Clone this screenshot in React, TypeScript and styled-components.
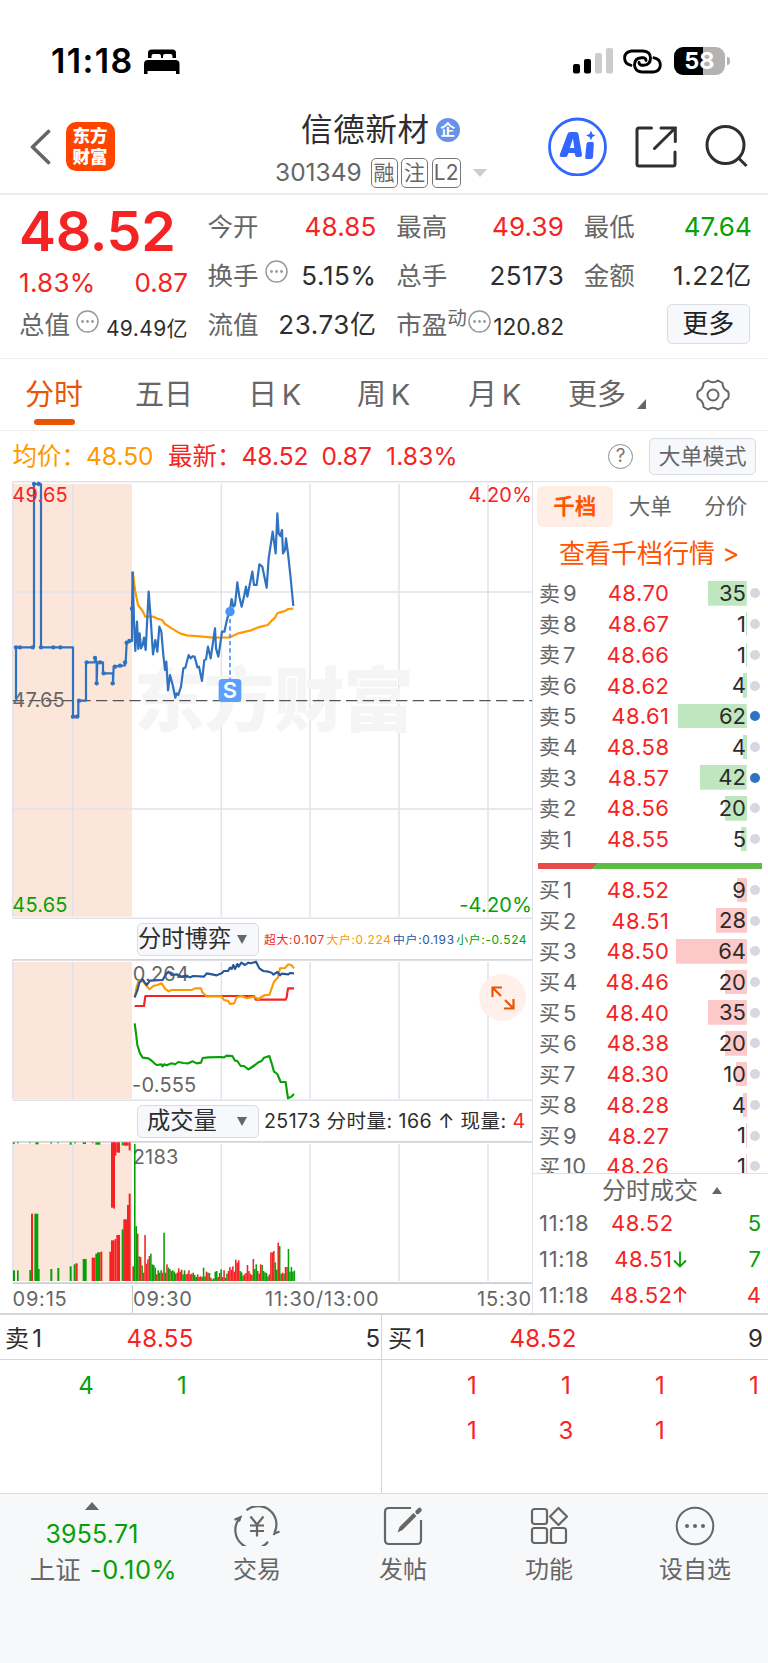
import React from 'react';
import styled, { createGlobalStyle } from 'styled-components';

const C = {
  red: '#f52323',
  green: '#07a007',
  text: '#2e2e2e',
  sub: '#666666',
  line: '#dfe2ea',
  accent: '#ea5504',
  orange: '#ff5500',
  amber: '#ff9900',
  blue: '#2f72c2',
  navy: '#2a5599',
  peach: '#fce6da',
};

const Global = createGlobalStyle`
  * { box-sizing: border-box; }
  body {
    margin: 0;
    background: #fff;
    color: ${C.text};
    font-family: Inter, "Noto Sans CJK SC", sans-serif;
    line-height: 1;
  }
  svg { display: block; flex: none; }
`;

const Page = styled.div`
  width: 768px;
  height: 1663px;
  display: flex;
  flex-direction: column;
  overflow: hidden;
  white-space: nowrap;
`;

const Txt = styled.span<{ $s: number; $c?: string; $w?: number; $ls?: number }>`
  font-size: ${p => p.$s}px;
  color: ${p => p.$c || 'inherit'};
  font-weight: ${p => p.$w || 400};
  letter-spacing: ${p => p.$ls || 0}px;
`;

/* ---------- status bar ---------- */
const StatusBar = styled.div`
  height: 100px;
  padding: 22px 38px 0 51px;
  display: flex;
  align-items: center;
  color: #000;
`;
const BedIcon = styled.svg`
  margin-left: 10px;
`;
const StatusRight = styled.div`
  margin-left: auto;
  display: flex;
  align-items: center;
  gap: 9px;
`;
const Battery = styled.div`
  width: 51px;
  height: 28px;
  margin-left: 3px;
  border-radius: 9px;
  display: flex;
  align-items: center;
  justify-content: center;
  color: #fff;
  font-size: 23.5px;
  font-weight: 700;
  background: linear-gradient(90deg, #000 29px, #b3b3b3 29px);
`;
const BatteryCap = styled.div`
  width: 3px;
  height: 8px;
  margin-left: -7px;
  border-radius: 0 3px 3px 0;
  background: #b3b3b3;
`;

/* ---------- header ---------- */
const Header = styled.header`
  height: 95px;
  border-bottom: 2px solid #ebebeb;
  display: flex;
  align-items: center;
  padding: 0 20px 0 29.5px;
`;
const Logo = styled.div`
  width: 49px;
  height: 49px;
  margin-left: 15px;
  border-radius: 10px;
  background: #ff4400;
  color: #fff;
  font-size: 17.5px;
  font-weight: 900;
  line-height: 20.5px;
  text-align: center;
  padding-top: 4px;
`;
const TitleBlock = styled.div`
  flex: 1;
  display: flex;
  flex-direction: column;
  padding: 11px 0 0 160.5px;
`;
const TitleLine = styled.div<{ $h: number; $pad?: number }>`
  height: ${p => p.$h}px;
  padding-left: ${p => p.$pad || 0}px;
  display: flex;
  align-items: center;
`;
const StockCode = styled.span`
  width: 95.5px;
  color: ${C.sub};
  font-size: 24.5px;
`;
const Badge = styled.div`
  width: 24px;
  height: 24px;
  margin-left: 6px;
  border-radius: 50%;
  background: #6792e8;
  color: #fff;
  font-size: 15px;
  font-weight: 700;
  line-height: 23px;
  text-align: center;
`;
const Tag = styled.div<{ $w: number }>`
  width: ${p => p.$w}px;
  height: 30px;
  margin-right: 3.6px;
  border: 1px solid #777;
  border-radius: 5px;
  color: ${C.sub};
  font-size: 21px;
  line-height: 28px;
  text-align: center;
`;
const Caret = styled.div<{ $w: number; $h: number; $c: string; $up?: boolean; $ml?: number }>`
  width: 0;
  height: 0;
  flex: none;
  margin-left: ${p => p.$ml || 0}px;
  border-left: ${p => p.$w / 2}px solid transparent;
  border-right: ${p => p.$w / 2}px solid transparent;
  ${p => (p.$up ? 'border-bottom' : 'border-top')}: ${p => p.$h}px solid ${p => p.$c};
`;
const HeaderActions = styled.div`
  display: flex;
  align-items: center;
  gap: 28px;
`;

/* ---------- quote ---------- */
const Quote = styled.section`
  height: 164px;
  padding: 7px 16px 8px 19px;
  border-bottom: 1px solid #eee;
  display: grid;
  grid-template-columns: 169px 169px 168px 168px;
  column-gap: 19.6px;
`;
const QuoteCol = styled.div`
  display: flex;
  flex-direction: column;
`;
const Cell = styled.div<{ $h?: number; $top?: number }>`
  height: ${p => p.$h || 49}px;
  padding-top: ${p => p.$top || 0}px;
  display: flex;
  align-items: center;
  justify-content: space-between;
`;
const CellLabel = styled.span`
  display: flex;
  align-items: center;
  font-size: 25.5px;
  color: ${C.sub};
`;
const Raised = styled.span<{ $gap?: number; $up: number }>`
  display: flex;
  align-items: center;
  margin-left: ${p => p.$gap || 0}px;
  margin-bottom: ${p => p.$up}px;
  font-size: 19.5px;
`;
const SmallValue = styled.span<{ $s: number; $top: number; $ls: number }>`
  font-size: ${p => p.$s}px;
  padding-top: ${p => p.$top}px;
  letter-spacing: ${p => p.$ls}px;
`;
const Button = styled.div<{ $w: number; $h: number }>`
  width: ${p => p.$w}px;
  height: ${p => p.$h}px;
  border: 1.5px solid #d9dce2;
  border-radius: 5px;
  background: #f7f8fb;
  display: flex;
  align-items: center;
  justify-content: center;
`;
const MoreCell = styled(Cell)`
  justify-content: flex-end;
  padding: 0 2px 2px 0;
`;

/* ---------- period tabs ---------- */
const Tabs = styled.nav`
  height: 72px;
  border-bottom: 1px solid #eee;
  display: flex;
  align-items: center;
  justify-content: space-between;
  padding: 0 38px 0 25px;
`;
const TabList = styled.div`
  height: 100%;
  display: flex;
`;
const Tab = styled.div<{ $w: number; $on?: boolean }>`
  width: ${p => p.$w}px;
  height: 100%;
  display: flex;
  flex-direction: column;
  padding-top: 21px;
  font-size: 29px;
  line-height: 30px;
  word-spacing: -3.5px;
  color: ${p => (p.$on ? C.accent : C.sub)};
  &::after {
    content: '';
    display: ${p => (p.$on ? 'block' : 'none')};
    width: 41px;
    height: 6px;
    margin: 9px 0 0 9px;
    border-radius: 3px;
    background: ${C.accent};
  }
`;
const MoreTab = styled(Tab)`
  flex-direction: row;
  align-items: flex-start;
  justify-content: flex-start;
  svg { margin: 19px 0 0 11px; }
`;

const InfoLine = styled.div`
  height: 50px;
  display: flex;
  align-items: center;
  padding: 0 12px 0 12.5px;
`;
const InfoItem = styled.div<{ $w: number; $c: string; $ls?: number }>`
  width: ${p => p.$w}px;
  color: ${p => p.$c};
  font-size: 24.5px;
  letter-spacing: ${p => p.$ls || 0}px;
`;
const HelpButton = styled.div`
  margin: 0 16px 0 auto;
  width: 25px;
  height: 25px;
  border: 1.5px solid #8c8c8c;
  border-radius: 50%;
  color: #777;
  font-size: 19px;
  line-height: 22px;
  text-align: center;
`;

/* ---------- main area ---------- */
const Main = styled.section`
  height: 834px;
  border-bottom: 2px solid #d3d5dd;
  display: flex;
`;
const Charts = styled.div`
  width: 533px;
  border-right: 1.5px solid ${C.line};
  display: flex;
  flex-direction: column;
`;
const ChartHead = styled.div`
  height: 40px;
  padding-left: 137px;
  display: flex;
  align-items: center;
`;
const Dropdown = styled.div<{ $pad: number }>`
  width: 122px;
  height: 33px;
  padding: 0 11px 0 ${p => p.$pad}px;
  margin-right: 5px;
  border: 1.5px solid #d9dce2;
  border-radius: 5px;
  background: #f7f8fb;
  display: flex;
  align-items: center;
  justify-content: space-between;
  font-size: 23.3px;
`;
const Legend = styled.div`
  display: flex;
  gap: 1.6px;
  padding-top: 1px;
  font-size: 11.9px;
  letter-spacing: 0.6px;
`;
const VolumeInfo = styled.div`
  padding-top: 1px;
  font-size: 19.6px;
  letter-spacing: 0.4px;
`;
const SubChart = styled.div`
  position: relative;
  height: 142px;
`;
const ExpandButton = styled.div`
  position: absolute;
  left: 479px;
  top: 15px;
  width: 47px;
  height: 47px;
  border-radius: 50%;
  background: rgba(255, 238, 230, 0.85);
  display: flex;
  align-items: center;
  justify-content: center;
`;
const TimeAxis = styled.div`
  height: 29px;
  display: grid;
  grid-template-columns: 119.5px 133px 1fr 55px;
  padding: 1px 0 0 12.5px;
  align-items: center;
  color: ${C.sub};
  font-size: 20px;
  letter-spacing: 0.8px;
`;
const TimeMark = styled.span<{ $line?: boolean }>`
  height: 100%;
  display: flex;
  align-items: center;
  border-left: ${p => (p.$line ? 1 : 0)}px solid #ccc;
`;

const Book = styled.div`
  width: 235px;
  display: flex;
  flex-direction: column;
  > * { flex: none; }
`;
const BookTabs = styled.div`
  height: 51px;
  border-top: 1px solid ${C.line};
  padding: 4px 0 0 4px;
  display: flex;
`;
const BookTab = styled.div<{ $on?: boolean }>`
  width: 75.5px;
  height: 41px;
  flex: none;
  border-radius: 6px;
  display: flex;
  align-items: center;
  justify-content: center;
  font-size: 21.5px;
  font-weight: ${p => (p.$on ? 700 : 400)};
  color: ${p => (p.$on ? C.orange : C.sub)};
  background: ${p => (p.$on ? '#ffeee6' : 'transparent')};
`;
const BookLink = styled.div`
  height: 46px;
  padding: 0 0 2px 26px;
  display: flex;
  align-items: center;
  color: ${C.orange};
  font-size: 26px;
`;
const Level = styled.div`
  height: 30.73px;
  padding-left: 6px;
  display: grid;
  grid-template-columns: 61px 69.5px 77.5px 16px;
  align-items: center;
  font-size: 22px;
`;
const LevelName = styled.span`
  display: flex;
  gap: 3px;
  align-items: center;
  color: ${C.sub};
  letter-spacing: 0.3px;
`;
const LevelPrice = styled.span`
  text-align: right;
  color: ${C.red};
  letter-spacing: 0.5px;
`;
const Volume = styled.span<{ $w: number; $sell?: boolean }>`
  height: 24.5px;
  line-height: 24.5px;
  text-align: right;
  padding-right: 1px;
  background: linear-gradient(${p => (p.$sell ? '#bfe7bf, #bfe7bf' : '#fdc8c8, #fdc8c8')}) right / ${p => p.$w}px 100% no-repeat;
  color: #2b2b2b;
`;
const Dot = styled.span<{ $on?: boolean }>`
  width: 10px;
  height: 10px;
  margin-left: 3px;
  border-radius: 50%;
  background: ${p => (p.$on ? C.blue : '#d5d8de')};
`;
const Ratio = styled.div`
  height: 6px;
  width: 224px;
  margin: 8.5px 0 5.5px 5px;
  background: linear-gradient(135deg, #e94b4b 42.4px, #5dbb46 42.4px);
`;
const BuyList = styled.div`
  height: 299px;
  overflow: hidden;
`;
const TradesHead = styled.div`
  height: 32px;
  border-top: 1.5px solid ${C.line};
  padding: 2px 0 0 69px;
  display: flex;
  align-items: center;
  gap: 14px;
  color: ${C.sub};
`;
const Trade = styled.div`
  height: 35.8px;
  padding: 0 7px 0 6px;
  display: grid;
  grid-template-columns: 67px 66.500px 17.500px 1fr;
  align-items: center;
  font-size: 22px;
`;
const TradeTime = styled.span`
  color: ${C.sub};
  letter-spacing: 0.7px;
`;
const TradePrice = styled.span<{ $right?: boolean }>`
  color: ${C.red};
  letter-spacing: 0.5px;
  padding-left: ${p => (p.$right ? 0 : 5)}px;
  text-align: ${p => (p.$right ? 'right' : 'left')};
`;
const TradeQty = styled.span<{ $c: string }>`
  grid-column: 4;
  color: ${p => p.$c};
  text-align: right;
`;

/* ---------- queue ---------- */
const Queue = styled.section`
  height: 178px;
  display: grid;
  grid-template-columns: 381px 387px;
`;
const QueueSide = styled.div<{ $line?: boolean }>`
  border-left: ${p => (p.$line ? 1.5 : 0)}px solid #d3d5dd;
`;
const QueueHead = styled.div<{ $l: number; $r: number }>`
  height: 45px;
  border-bottom: 1.5px solid #d3d5dd;
  padding: 4px ${p => p.$r}px 0 ${p => p.$l}px;
  display: grid;
  grid-template-columns: 121.5px 1fr auto;
  align-items: center;
  font-size: 24px;
  word-spacing: -3.5px;
`;
const QueueRow = styled.div<{ $c: string; $left: number; $step: number }>`
  height: 45px;
  padding: 7px 0 0 ${p => p.$left}px;
  display: flex;
  align-items: center;
  color: ${p => p.$c};
  font-size: 24px;
  span { width: ${p => p.$step}px; text-align: center; flex: none; }
`;

/* ---------- bottom bar ---------- */
const BottomBar = styled.footer`
  flex: 1;
  border-top: 1.5px solid #dcdde0;
  background: #f7f8fa;
  display: grid;
  grid-template-columns: 184px repeat(4, 146px);
`;
const NavItem = styled.div`
  display: flex;
  flex-direction: column;
  align-items: center;
  padding-top: 12px;
  gap: 12px;
  color: ${C.sub};
  font-size: 24px;
`;
const IndexItem = styled.div`
  display: flex;
  flex-direction: column;
  align-items: center;
  padding-top: 8px;
  color: ${C.green};
`;
const IndexLine = styled.div<{ $top: number; $shift?: number }>`
  margin: ${p => p.$top}px 0 0 ${p => p.$shift || 0}px;
  display: flex;
  gap: 9px;
  align-items: center;
`;

const Ellipsis = () => (
  <svg width="23" height="23" viewBox="0 0 23 23" fill="#999">
    <circle cx="11.5" cy="11.5" r="10.5" fill="none" stroke="#999" strokeWidth="1.5" />
    <circle cx="6.5" cy="11.5" r="1.4" /><circle cx="11.5" cy="11.5" r="1.4" /><circle cx="16.5" cy="11.5" r="1.4" />
  </svg>
);

/* Chart geometry: three drawing units to one CSS pixel. */
const VLINES = [664, 930, 1197, 1464];
const label = { fontSize: 60, letterSpacing: 0.6, fontFamily: 'Inter, sans-serif' };

const AUCTION = '48,672 48,517 102,517 102,27 123,27 123,517 219,517 219,725 235,725 235,677 258,677 258,562 285,562 285,549 290,562 290,625 292,562 309,562 309,595 339,595 339,625 341,575 358,573 375,571 377,562 380,503 388,498 396,498 396,401 398,290';
const PRICE = '398,290 402,440 406,528 411,440 415,522 419,475 423,520 428,510 432,488 437,525 446,350 452,430 459,538 466,495 472,530 478,455 484,470 490,540 495,585 499,560 504,646 510,600 518,630 526,668 530,655 535,660 543,635 550,580 556,578 566,540 572,550 577,544 584,545 592,577 597,575 606,618 613,555 618,553 624,515 632,550 645,460 648,520 655,545 661,505 666,470 673,470 682,430 690,405 695,372 700,395 705,390 712,322 718,365 725,395 733,360 738,335 742,365 757,290 762,330 770,330 778,268 787,275 800,338 806,250 818,170 827,235 832,115 836,175 841,183 846,165 849,235 855,225 858,190 864,235 871,300 880,393';
const AVERAGE = '398,290 406,350 414,390 428,408 436,425 460,425 470,430 486,435 495,447 515,460 540,475 560,481 600,484 640,488 690,487 715,475 750,467 775,457 803,450 815,437 825,428 832,415 840,412 855,408 865,402 880,401';
const AUCTION_DOTS = [[48,517],[60,517],[98,517],[102,27],[116,27],[123,517],[160,517],[181,517],[219,725],[231,725],[237,677],[260,562],[285,549],[290,625],[300,562],[311,595],[338,625],[345,575],[360,572],[375,562],[380,503],[388,498],[396,401]];

const MainChart = () => (
  <svg width="532" height="438" viewBox="0 18 1596 1314">
    <rect x="38" y="27" width="358" height="1298" fill={C.peach} />
    <g stroke={C.line} strokeWidth="4.5">
      <path d="M38 20H1596M38 1330H1596M38 20V1325" />
      <path d="M38 351H1596M38 1002H1596M218 27V1325" />
      {VLINES.map(x => <path key={x} d={`M${x} 27V1325`} />)}
    </g>
    <text x="402" y="754" fontSize="212" fontWeight="900" fontFamily="Noto Sans CJK SC, sans-serif" fill="#f5f5f6" textLength="840">东方财富</text>
    <path d="M38 677H1596" stroke="#555" strokeWidth="3.8" strokeDasharray="34 16" />
    <g {...label}>
      <text x="37" y="695" fill={C.sub}>47.65</text>
      <text x="37" y="1310" fill={C.green}>45.65</text>
      <text x="1596" y="82" fill={C.red} textAnchor="end">4.20%</text>
      <text x="1596" y="1310" fill={C.green} textAnchor="end">-4.20%</text>
    </g>
    <g fill="none" strokeWidth="6.6" strokeLinejoin="round">
      <polyline points={AVERAGE} stroke={C.amber} />
      <polyline points={AUCTION} stroke={C.blue} />
      <polyline points={PRICE} stroke={C.blue} />
    </g>
    {AUCTION_DOTS.map(([x, y]) => <circle key={`${x}-${y}`} cx={x} cy={y} r="6.5" fill={C.blue} />)}
    <text x="37" y="80" fill={C.red} {...label}>49.65</text>
    <path d="M690 410V612" stroke="#4a93f8" strokeWidth="5" strokeDasharray="13 9" />
    <circle cx="690" cy="410" r="14" fill="#4a93f8" />
    <rect x="656" y="612" width="68" height="69" rx="11" fill="#5a9ffc" />
    <text x="690" y="670" fontSize="66" fontWeight="600" fontFamily="Inter, sans-serif" fill="#fff" textAnchor="middle">S</text>
  </svg>
);

const FLOW = [
  { c: C.red, p: '404,318 432,318 436,288 762,288 767,299 857,299 860,292 864,265 882,265' },
  { c: C.amber, p: '404,292 409,265 415,245 425,240 438,255 448,268 460,258 472,255 485,250 495,266 506,274 515,270 575,270 585,265 603,265 607,277 620,289 665,289 672,300 685,303 690,312 702,310 710,292 725,288 740,295 760,290 775,297 795,285 808,285 815,265 822,245 834,232 840,205 855,204 865,193 875,196 882,205' },
  { c: C.navy, p: '404,292 412,272 418,248 428,238 434,247 440,255 450,242 488,240 498,222 505,215 515,225 530,223 545,230 560,227 570,232 580,228 612,230 620,220 640,224 650,226 665,220 672,213 684,213 690,203 695,207 700,195 705,207 712,192 716,200 724,188 735,195 745,188 753,190 768,185 778,205 790,213 805,215 815,218 820,224 832,216 840,226 845,221 865,223 870,219 882,220' },
  { c: C.green, p: '404,370 408,400 412,435 420,460 428,473 445,475 455,482 463,490 470,495 484,493 488,499 492,493 500,496 515,490 525,493 535,486 550,489 565,490 578,484 590,490 603,488 608,474 625,472 660,471 672,472 680,467 697,468 705,482 712,483 722,498 732,498 745,508 752,504 765,495 775,487 785,483 792,473 808,468 815,490 822,515 832,522 842,546 857,546 861,575 864,595 874,590 882,582' },
];

const FlowChart = () => (
  <svg width="532" height="142" viewBox="0 177 1596 426">
    <rect x="38" y="186" width="358" height="411" fill={C.peach} />
    <g stroke={C.line} strokeWidth="4.5">
      <path d="M38 179.500H1596" stroke="#d3d5dd" strokeWidth="5" />
      <path d="M38 601H1596M38 179V597M218 186V597" />
      {VLINES.map(x => <path key={x} d={`M${x} 186V597`} />)}
    </g>
    <g fill={C.sub} {...label}>
      <text x="398" y="244">0.264</text>
      <text x="396" y="576">-0.555</text>
    </g>
    <g fill="none" strokeWidth="6.4" strokeLinejoin="round">
      {FLOW.map(f => <polyline key={f.c} points={f.p} stroke={f.c} />)}
    </g>
  </svg>
);

/* [x, width, height, colour] */
const AUCTION_BARS: [number, number, number, string][] = [
  [39,6,32,'g'],[51,5,32,'g'],[88,5,33,'g'],[93,6,202,'r'],[103,12,202,'g'],[114,5,36,'g'],[151,6,36,'g'],[172,6,39,'g'],
  [209,6,44,'g'],[221,5,50,'g'],[226,7,53,'r'],[248,12,66,'g'],[275,11,70,'r'],[286,5,82,'g'],[291,10,86,'g'],[301,6,88,'r'],
  [328,6,88,'r'],[333,11,122,'r'],[344,5,126,'r'],[349,11,138,'r'],[365,6,155,'g'],[370,11,185,'r'],[381,6,228,'r'],[386,6,262,'r'],[397,5,44,'r'],
];
const HANGING_BARS: [number, number, number, string][] = [
  [39,5,5,'g'],[51,5,3,'g'],[88,4,3,'g'],[106,10,6,'g'],[151,5,4,'g'],[172,5,3,'g'],[209,6,7,'g'],[222,6,3,'g'],[248,10,5,'g'],[276,5,3,'r'],
  [286,15,7,'g'],[333,11,196,'r'],[340,5,199,'r'],[344,5,40,'r'],[349,11,31,'r'],[365,6,9,'g'],[371,15,10,'r'],[386,6,24,'r'],
];
const SESSION = '411g165g142r74g72r47g25r138r52r65r75r82g50g48g40g20r32g25r32g25r145g25g50r40g36g30r32g28g22g25r38r28r34r20g32g20r22r32r20r22r25g18g12g20r12r14r12g40g14g28r25r24g10r5g8g28g30g12r24r35g12r32r10g22g30r42r34r44r28r64r55r62r30g26g16g20r24r48r30r22r18g66r36g50g30r22r50r48g30g26g24g14g20r86r86r90r56g34g115r105g22g25r22g42r42r96g28g42g28g31g'
  .match(/\d+[rg]/g)!
  .map(s => ({ h: parseInt(s, 10), c: s.endsWith('r') ? C.red : C.green }));
const SESSION_STEP = 483 / SESSION.length;

const VolumeChart = () => (
  <svg width="532" height="143" viewBox="0 63 1596 429">
    <rect x="38" y="72" width="358" height="411" fill={C.peach} />
    <g stroke={C.line} strokeWidth="4.5">
      <path d="M38 65.500H1596" stroke="#d3d5dd" strokeWidth="5" />
      <path d="M38 65V483M218 72V483" />
      {VLINES.map(x => <path key={x} d={`M${x} 72V483`} />)}
      <path d="M38 489.500H1596" stroke="#cdced3" strokeWidth="5" />
    </g>
    <text x="398" y="131" fill={C.sub} {...label}>2183</text>
    {AUCTION_BARS.map(([x, w, h, c]) => <rect key={x} x={x} y={483 - h} width={w} height={h} fill={c === 'r' ? C.red : C.green} />)}
    {HANGING_BARS.map(([x, w, h, c]) => <rect key={x} x={x} y={67} width={w} height={h} fill={c === 'r' ? C.red : C.green} />)}
    {SESSION.map((b, i) => <rect key={i} x={402 + i * SESSION_STEP} y={483 - b.h} width={SESSION_STEP + 0.3} height={b.h} fill={b.c} />)}
  </svg>
);

type Lv = [string, string, number, boolean?];
const SELLS: Lv[] = [['9','48.70',35],['8','48.67',1],['7','48.66',1],['6','48.62',4],['5','48.61',62,true],['4','48.58',4],['3','48.57',42,true],['2','48.56',20],['1','48.55',5]];
const BUYS: Lv[] = [['1','48.52',9],['2','48.51',28],['3','48.50',64],['4','48.46',20],['5','48.40',35],['6','48.38',20],['7','48.30',10],['8','48.28',4],['9','48.27',1],['10','48.26',1]];

const LevelRow = ({ lv, sell }: { lv: Lv; sell?: boolean }) => (
  <Level>
    <LevelName><Txt $s={21}>{sell ? '卖' : '买'}</Txt><span>{lv[0]}</span></LevelName>
    <LevelPrice>{lv[1]}</LevelPrice>
    <Volume $w={lv[2] * 1.11} $sell={sell}>{lv[2]}</Volume>
    <Dot $on={lv[3]} />
  </Level>
);

const TradeArrow = ({ up }: { up: boolean }) => (
  <svg width="14" height="17" viewBox="0 0 14 17" fill="none" stroke={up ? C.red : C.green} strokeWidth="1.8">
    <path d={up ? 'M7 16.5V1.5M1 7.5 7 1.5 13 7.5' : 'M7 .5V15.5M1 9.5 7 15.5 13 9.5'} />
  </svg>
);

export default function App() {
  return (
    <Page>
      <Global />
      <StatusBar>
        <Txt $s={34} $w={600} $ls={1.4}>11:18</Txt>
        <BedIcon width="36" height="25" viewBox="0 0 36 25">
          <path d="M4 9V4Q4 .5 7.500 .5H28.500Q32 .5 32 4V9H28.500V7Q28.500 5 26.500 5H21Q19 5 19 7V9H17V7Q17 5 15 5H9.500Q7.500 5 7.500 7V9Z" />
          <path d="M0 25V15Q0 11 4 11H31.500Q35.500 11 35.500 15V25H32V22H3.500V25Z" />
        </BedIcon>
        <StatusRight>
          <svg width="41" height="26" viewBox="0 0 41 26">
            <rect x="0" y="16" width="7" height="9.500" rx="2" />
            <rect x="11" y="11" width="7" height="14.500" rx="2" />
            <rect x="22" y="5" width="7" height="20.500" rx="2" fill="#ccc" />
            <rect x="33" y="0" width="7" height="25.500" rx="2" fill="#ccc" />
          </svg>
          <svg width="39" height="25" viewBox="0 0 39 25" fill="none" stroke="#000" strokeWidth="2.900" strokeLinecap="round">
            <path d="M8 16.300Q1.600 15 1.600 9T8.500 2H20Q27.500 2.500 27.500 9Q27.500 16 20.500 16.300H18.500Q16 15.500 16 13.500" />
            <path d="M31 8.800Q37.300 10 37.300 16T30.500 23H19Q11.800 22.500 11.500 16Q11.500 9 18.500 8.700H20.500Q23 9.500 23 11.500" />
          </svg>
          <Battery>58</Battery>
          <BatteryCap />
        </StatusRight>
      </StatusBar>

      <Header>
        <svg width="21" height="37" viewBox="0 0 21 37" fill="none" stroke="#666" strokeWidth="3.600" strokeLinecap="round" strokeLinejoin="round">
          <path d="M18.500 3.500 2.500 19 18.500 34.500" />
        </svg>
        <Logo>东方<br />财富</Logo>
        <TitleBlock>
          <TitleLine $h={41} $pad={26}>
            <Txt $s={31.5} $ls={0.7}>信德新材</Txt>
            <Badge>企</Badge>
          </TitleLine>
          <TitleLine $h={44}>
            <StockCode>301349</StockCode>
            <Tag $w={27}>融</Tag>
            <Tag $w={27}>注</Tag>
            <Tag $w={29}>L2</Tag>
            <Caret $w={14} $h={8} $c="#ccc" $ml={9} />
          </TitleLine>
        </TitleBlock>
        <HeaderActions>
          <svg width="59" height="59" viewBox="0 0 59 59" fill="#3366ff">
            <circle cx="29.500" cy="30" r="28" fill="none" stroke="#3366ff" strokeWidth="2.800" />
            <path fillRule="evenodd" d="M19.500 17Q20 15 22.500 15H28Q30 15 30.500 17L34 38Q34 40 32 40H29Q27.500 40 27 38L26.700 36H20.500L19.500 38.500Q19 40 17.500 40H13.500Q11 40 12 37ZM25 21.500 21.800 31H26.200Z" />
            <path d="M40.500 25H44.500Q46 25 45.800 27L45 40Q45 42 43 42H38.500Q37 42 37.200 40L38.500 27Q38.700 25 40.500 25Z" />
            <path d="M43 13.500 44.300 17 47.500 18.500 44.300 20 43 23.500 41.500 20 38 18.500 41.500 17Z" />
          </svg>
          <svg width="42" height="42" viewBox="0 0 42 42" fill="none" stroke="#2f2f2f" strokeWidth="3">
            <path d="M16.500 2H4Q2 2 2 4V38Q2 40 4 40H38Q40 40 40 38V26" strokeLinecap="round" />
            <path d="M26 2H40.300V15.500M40 2.300 19.500 22.500" strokeLinecap="round" />
          </svg>
          <svg width="43" height="43" viewBox="0 0 43 43" fill="none" stroke="#2f2f2f" strokeWidth="3">
            <circle cx="20.500" cy="20" r="18.500" />
            <path d="M33.500 33 41.500 41" />
          </svg>
        </HeaderActions>
      </Header>

      <Quote>
        <QuoteCol>
          <Cell $h={58}><Txt $s={55.5} $w={600} $c={C.red} $ls={-0.3}>48.52</Txt></Cell>
          <Cell $h={40} $top={5}>
            <Txt $s={26} $c={C.red} $ls={0.3}>1.83%</Txt><Txt $s={26} $c={C.red}>0.87</Txt>
          </Cell>
          <Cell><CellLabel>总值<Raised $gap={6} $up={7}><Ellipsis /></Raised></CellLabel><SmallValue $s={21} $top={7} $ls={0.4}>49.49亿</SmallValue></Cell>
        </QuoteCol>
        <QuoteCol>
          <Cell><CellLabel>今开</CellLabel><Txt $s={26} $c={C.red} $ls={0.2}>48.85</Txt></Cell>
          <Cell><CellLabel>换手<Raised $gap={6} $up={8}><Ellipsis /></Raised></CellLabel><Txt $s={26} $ls={0.6}>5.15%</Txt></Cell>
          <Cell><CellLabel>流值</CellLabel><Txt $s={26} $ls={0.6}>23.73亿</Txt></Cell>
        </QuoteCol>
        <QuoteCol>
          <Cell><CellLabel>最高</CellLabel><Txt $s={26} $c={C.red} $ls={0.2}>49.39</Txt></Cell>
          <Cell><CellLabel>总手</CellLabel><Txt $s={26} $ls={0.4}>25173</Txt></Cell>
          <Cell><CellLabel>市盈<Raised $up={12}>动</Raised><Raised $gap={1} $up={7}><Ellipsis /></Raised></CellLabel><SmallValue $s={22.8} $top={5} $ls={0}>120.82</SmallValue></Cell>
        </QuoteCol>
        <QuoteCol>
          <Cell><CellLabel>最低</CellLabel><Txt $s={26} $c={C.green}>47.64</Txt></Cell>
          <Cell><CellLabel>金额</CellLabel><Txt $s={26} $ls={0.6}>1.22亿</Txt></Cell>
          <MoreCell><Button $w={83} $h={40}><Txt $s={26} $c="#222">更多</Txt></Button></MoreCell>
        </QuoteCol>
      </Quote>

      <Tabs>
        <TabList>
          <Tab $w={110} $on>分时</Tab>
          <Tab $w={113}>五日</Tab>
          <Tab $w={109}>日 K</Tab>
          <Tab $w={111}>周 K</Tab>
          <Tab $w={100}>月 K</Tab>
          <MoreTab $w={100}>更多<svg width="9" height="10" viewBox="0 0 9 10" fill="#666"><path d="M9 0V10H0Z" /></svg></MoreTab>
        </TabList>
        <svg width="34" height="34" viewBox="0 0 34 34" fill="none" stroke="#666" strokeWidth="2" strokeLinejoin="round">
          <path d="M12 2.500Q17 6 22 2.500L26.500 5Q26.500 11 32 13.500Q33.500 17 32 20.500Q26.500 23 26.500 29L22 31.500Q17 28 12 31.500L7.500 29Q7.500 23 2 20.500Q.5 17 2 13.500Q7.500 11 7.500 5Z" />
          <circle cx="17" cy="17" r="5.500" />
        </svg>
      </Tabs>

      <InfoLine>
        <InfoItem $w={73.5} $c={C.amber}>均价：</InfoItem>
        <InfoItem $w={82} $c={C.amber}>48.50</InfoItem>
        <InfoItem $w={73.5} $c={C.red}>最新：</InfoItem>
        <InfoItem $w={80} $c={C.red}>48.52</InfoItem>
        <InfoItem $w={64.5} $c={C.red}>0.87</InfoItem>
        <InfoItem $w={80} $c={C.red} $ls={0.2}>1.83%</InfoItem>
        <HelpButton>?</HelpButton>
        <Button $w={107} $h={37}><Txt $s={22} $c={C.sub}>大单模式</Txt></Button>
      </InfoLine>

      <Main>
        <Charts>
          <MainChart />
          <ChartHead>
            <Dropdown $pad={0}>分时博弈<Caret $w={10} $h={9} $c="#666" /></Dropdown>
            <Legend>
              <Txt $s={11.9} $c={C.red} $ls={0.65}>超大:0.107</Txt>
              <Txt $s={11.9} $c={C.amber} $ls={0.65}>大户:0.224</Txt>
              <Txt $s={11.9} $c={C.navy} $ls={0.65}>中户:0.193</Txt>
              <Txt $s={11.9} $c={C.green} $ls={0.65}>小户:-0.524</Txt>
            </Legend>
          </ChartHead>
          <SubChart>
            <FlowChart />
            <ExpandButton>
              <svg width="24" height="24" viewBox="0 0 24 24" fill="none" stroke={C.accent} strokeWidth="2.200">
                <path d="M1.500 11V1.500H11M1.500 1.500 10 10M22.500 13V22.500H13M22.500 22.500 14 14" />
              </svg>
            </ExpandButton>
          </SubChart>
          <ChartHead>
            <Dropdown $pad={9}>成交量<Caret $w={10} $h={9} $c="#666" /></Dropdown>
            <VolumeInfo>25173 分时量: 166 ↑ 现量: <Txt $s={19.6} $c={C.red}>4</Txt></VolumeInfo>
          </ChartHead>
          <VolumeChart />
          <TimeAxis>
            <TimeMark>09:15</TimeMark>
            <TimeMark $line>09:30</TimeMark>
            <TimeMark>11:30/13:00</TimeMark>
            <TimeMark>15:30</TimeMark>
          </TimeAxis>
        </Charts>
        <Book>
          <BookTabs>
            <BookTab $on>千档</BookTab><BookTab>大单</BookTab><BookTab>分价</BookTab>
          </BookTabs>
          <BookLink>查看千档行情 &gt;</BookLink>
          {SELLS.map(lv => <LevelRow key={lv[0]} lv={lv} sell />)}
          <Ratio />
          <BuyList>{BUYS.map(lv => <LevelRow key={lv[0]} lv={lv} />)}</BuyList>
          <TradesHead><Txt $s={24}>分时成交</Txt><Caret $w={11} $h={7} $c="#666" $up /></TradesHead>
          <Trade><TradeTime>11:18</TradeTime><TradePrice>48.52</TradePrice><TradeQty $c={C.green}>5</TradeQty></Trade>
          <Trade><TradeTime>11:18</TradeTime><TradePrice $right>48.51</TradePrice><TradeArrow up={false} /><TradeQty $c={C.green}>7</TradeQty></Trade>
          <Trade><TradeTime>11:18</TradeTime><TradePrice $right>48.52</TradePrice><TradeArrow up /><TradeQty $c={C.red}>4</TradeQty></Trade>
        </Book>
      </Main>

      <Queue>
        <QueueSide>
          <QueueHead $l={5} $r={1}><span>卖 1</span><Txt $s={24} $c={C.red} $ls={0.3}>48.55</Txt><span>5</span></QueueHead>
          <QueueRow $c={C.green} $left={38} $step={96}><span>4</span><span>1</span></QueueRow>
        </QueueSide>
        <QueueSide $line>
          <QueueHead $l={6} $r={5}><span>买 1</span><Txt $s={24} $c={C.red} $ls={0.3}>48.52</Txt><span>9</span></QueueHead>
          <QueueRow $c={C.red} $left={43} $step={94}><span>1</span><span>1</span><span>1</span><span>1</span></QueueRow>
          <QueueRow $c={C.red} $left={43} $step={94}><span>1</span><span>3</span><span>1</span></QueueRow>
        </QueueSide>
      </Queue>

      <BottomBar>
        <IndexItem>
          <Caret $w={14} $h={8} $c="#666" $up />
          <IndexLine $top={12}><Txt $s={25} $ls={0.2}>3955.71</Txt></IndexLine>
          <IndexLine $top={10} $shift={23}><Txt $s={25.5} $c={C.sub}>上证</Txt><Txt $s={25.5} $ls={0.6}>-0.10%</Txt></IndexLine>
        </IndexItem>
        <NavItem>
          <svg width="46" height="40" viewBox="0 0 46 40" fill="none" stroke="#666" strokeWidth="2.200">
            <path d="M12.500 4.200A18.300 18.300 0 0 1 40.500 26.500M39.500 29 40.500 27.500 45.500 25.500M34 35.800A18.300 18.300 0 0 1 5.500 12.500M.5 13.800 6.500 11.200 5 15.500" />
            <path d="M16.500 10.500 23 18.500 29.500 10.500M23 18.500V30.500M16 19.500H30M16 25H30" />
          </svg>
          交易
        </NavItem>
        <NavItem>
          <svg width="40" height="40" viewBox="0 0 40 40" fill="none" stroke="#666" strokeWidth="2.200">
            <path d="M28 2H6Q2 2 2 6V34Q2 38 6 38H34Q38 38 38 34V14" />
            <path d="M14.500 26.500 16.500 21 30.500 7 33.500 10 19.500 24Z" fill="#666" stroke="none" />
            <path d="M34.500 6 36.500 4" strokeWidth="4.500" strokeLinecap="round" />
          </svg>
          发帖
        </NavItem>
        <NavItem>
          <svg width="40" height="40" viewBox="0 0 40 40" fill="none" stroke="#666" strokeWidth="2.200">
            <rect x="3" y="3" width="15" height="15" rx="2.500" /><rect x="3" y="22" width="15" height="15" rx="2.500" /><rect x="22" y="22" width="15" height="15" rx="2.500" />
            <path d="M29.500 2 38 10.500 29.500 19 21 10.500Z" strokeLinejoin="round" />
          </svg>
          功能
        </NavItem>
        <NavItem>
          <svg width="40" height="40" viewBox="0 0 40 40" fill="#666">
            <circle cx="20" cy="20" r="18.300" fill="none" stroke="#666" strokeWidth="2" />
            <circle cx="12" cy="20" r="2" /><circle cx="20" cy="20" r="2" /><circle cx="28" cy="20" r="2" />
          </svg>
          设自选
        </NavItem>
      </BottomBar>
    </Page>
  );
}
